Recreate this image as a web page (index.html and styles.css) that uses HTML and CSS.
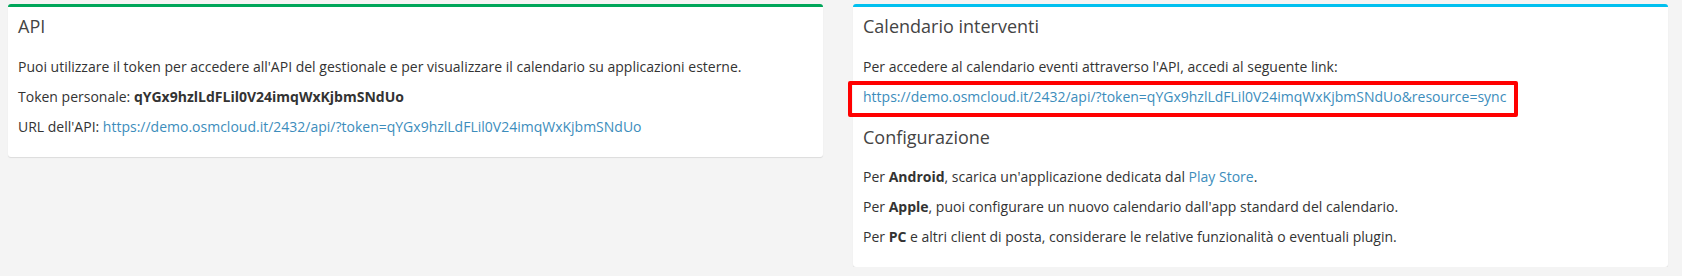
FILE: index.html
```html
<!DOCTYPE html>
<html lang="it">
<head>
    <meta charset="UTF-8">
    <title>API</title>
    <link rel="stylesheet" href="styles.css">
</head>
<body>
    <div class="row">
        <!-- API -->
        <div class="box box-success">
            <div class="box-header">
                <h3 class="box-title">API</h3>
            </div>
            <div class="box-body">
                <p>Puoi utilizzare il token per accedere all'API del gestionale e per visualizzare il calendario su applicazioni esterne.</p>
                <p>Token personale: <b>qYGx9hzlLdFLil0V24imqWxKjbmSNdUo</b></p>
                <p>URL dell'API: <a href="#">https://demo.osmcloud.it/2432/api/?token=qYGx9hzlLdFLil0V24imqWxKjbmSNdUo</a></p>
            </div>
        </div>
        <!-- Calendario -->
        <div class="box box-info">
            <div class="box-header">
                <h3 class="box-title">Calendario interventi</h3>
            </div>
            <div class="box-body">
                <p>Per accedere al calendario eventi attraverso l'API, accedi al seguente link:</p>
                <p class="highlight"><a href="#">https://demo.osmcloud.it/2432/api/?token=qYGx9hzlLdFLil0V24imqWxKjbmSNdUo&amp;resource=sync</a></p>
                <h4 class="section-title">Configurazione</h4>
                <p>Per <b>Android</b>, scarica un'applicazione dedicata dal <a href="#">Play Store</a>.</p>
                <p>Per <b>Apple</b>, puoi configurare un nuovo calendario dall'app standard del calendario.</p>
                <p>Per <b>PC</b> e altri client di posta, considerare le relative funzionalità o eventuali plugin.</p>
            </div>
        </div>
    </div>
</body>
</html>
```
FILE: styles.css
```css
body {
    font-family: 'Open Sans', sans-serif;
    font-size: 14px;
    line-height: 20px;
    color: #333;
    background: #f4f4f4;
    margin: 0;
}
.row {
    display: flex;
    align-items: flex-start;
    gap: 30px;
    padding: 4px 14px 0 8px;
}
.box {
    flex: 1;
    background: #fff;
    border-top: 3px solid #d2d6de;
    border-radius: 3px;
    box-shadow: 0 1px 1px rgba(0, 0, 0, 0.1);
}
.box-success { border-top-color: #00a65a; }
.box-info { border-top-color: #00c0ef; }
.box-header {
    padding: 10px;
}
.box-title, .section-title {
    margin: 0;
    font-size: 18px;
    font-weight: normal;
    line-height: 1.1;
    color: #444;
}
.box-body {
    padding: 10px;
}
p {
    margin: 0 0 10px;
}
a {
    color: #3c8dbc;
    text-decoration: none;
}
b { font-weight: bold; }
.highlight {
    width: fit-content;
    border: 4px solid #f00;
    border-radius: 2px;
    padding: 2px 8px 6px 11px;
    margin: -6px 0 0 -15px;
}
.section-title {
    margin: 11px 0 19px;
}
```
